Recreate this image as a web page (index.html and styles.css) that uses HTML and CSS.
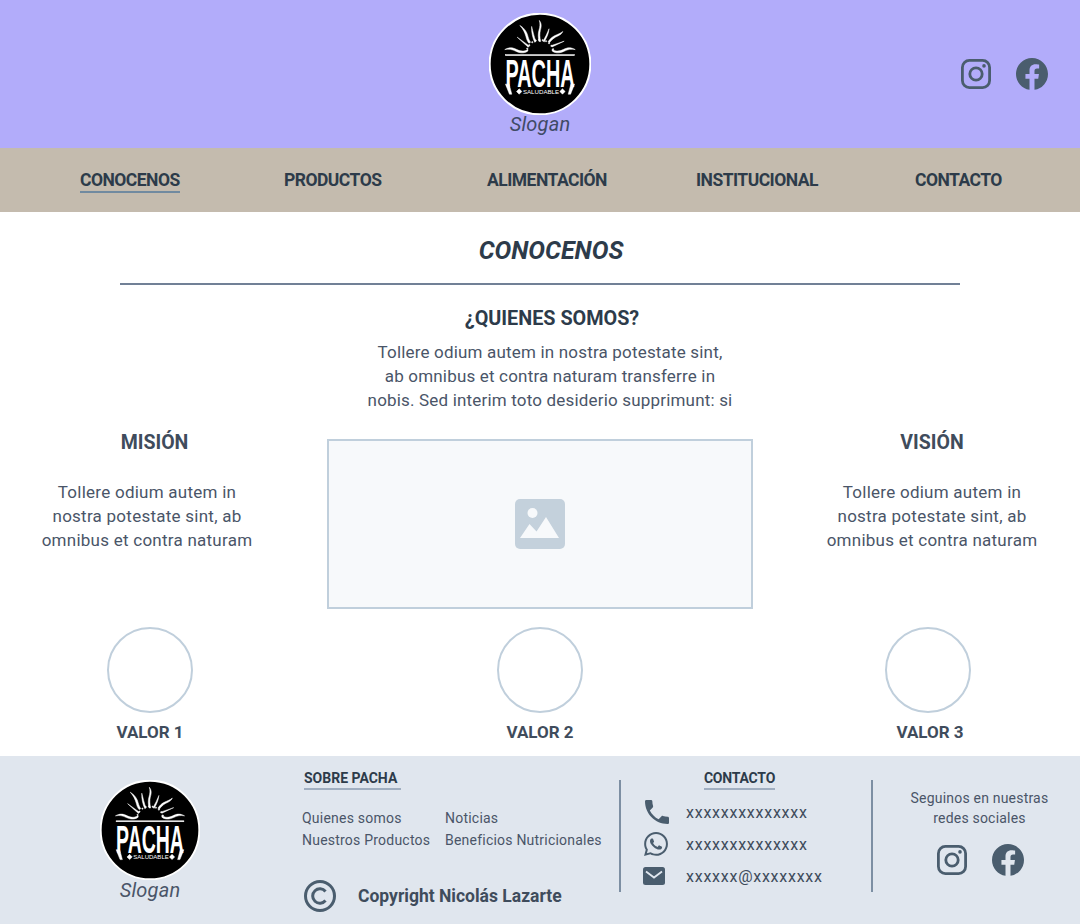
FILE: index.html
```html
<!DOCTYPE html>
<html lang="es">
<head>
<meta charset="utf-8">
<title>Pacha Saludable</title>
<link rel="stylesheet" href="styles.css">
</head>
<body>
<svg class="defs" width="0" height="0" aria-hidden="true">
  <symbol id="logo-art" viewBox="-152 -152 304 304">
    <circle r="150" fill="#000" stroke="#fff" stroke-width="6"/>
    <g fill="#fff" stroke="#fff" stroke-width="1.500">
      <path d="M-60-115c14 8 22 22 24 32 2 8 5 14 8 18l-5 3c-5-6-7-12-9-20-3-11-8-22-18-33z"/>
      <path d="M-25-112c4 14 7 30 13 45l-4 2c-6-14-10-30-9-47z"/>
      <path d="M-2-130c8 10 6 20 3 30-2 9-2 20 1 33h-5c-3-13-3-24 0-34 3-10 4-19 1-29z"/>
      <path d="M27-105c-1 14-7 26-14 39l-4-2c7-12 13-24 18-37z"/>
      <path d="M68-97c-4 10-14 13-22 17-7 4-13 10-18 17l-4-3c5-8 11-14 19-18 10-5 18-7 25-13z"/>
      <path d="M-68-80l36 26-3 4-33-30z"/>
      <path d="M72-68l-36 17-2-4z"/>
      <path d="M-105-43c14-8 24-6 36 0 10 5 22 7 33-1v5c-12 9-25 6-36 1-12-6-20-7-33-5z"/>
      <path d="M105-43c-14-8-24-6-36 0-10 5-22 7-33-1v5c12 9 25 6 36 1 12-6 20-7 33-5z"/>
      <circle cx="-38" cy="-46" r="2"/><circle cx="-32" cy="-56" r="2"/><circle cx="-23" cy="-65" r="2"/><circle cx="-13" cy="-70" r="2"/><circle cx="-3" cy="-72" r="2"/><circle cx="8" cy="-71" r="2"/><circle cx="18" cy="-68" r="2"/><circle cx="27" cy="-62" r="2"/><circle cx="34" cy="-54" r="2"/><circle cx="39" cy="-44" r="2"/>
      <rect x="-103" y="-28" width="206" height="3"/>
      <path d="M-103 60h11l8 30h-7zM103 60h-11l-8 30h7z"/>
      <path d="M-62 74l8 8-8 8-8-8zM67 74l8 8-8 8-8-8z"/>
    </g>
  </symbol>
  <symbol id="ig" viewBox="0 0 30 30">
    <rect x="1.400" y="1.400" width="27.200" height="27.200" rx="7" fill="none" stroke="currentColor" stroke-width="2.800"/>
    <circle cx="15" cy="15" r="6.200" fill="none" stroke="currentColor" stroke-width="2.800"/>
    <circle cx="23" cy="6.900" r="1.800" fill="currentColor"/>
  </symbol>
  <symbol id="fb" viewBox="2 2.040 20 20">
    <path fill="currentColor" d="M12 2.040C6.500 2.040 2 6.530 2 12.060C2 17.060 5.660 21.210 10.440 21.960V14.960H7.900V12.060H10.440V9.850C10.440 7.340 11.930 5.960 14.220 5.960C15.310 5.960 16.450 6.150 16.450 6.150V8.620H15.190C13.950 8.620 13.560 9.390 13.560 10.180V12.060H16.340L15.890 14.960H13.560V21.960A10 10 0 0 0 22 12.060C22 6.530 17.500 2.040 12 2.040Z"/>
  </symbol>
</svg>

<header class="top">
  <div class="brand">
    <svg class="logo" viewBox="-152 -152 304 304">
      <use href="#logo-art" x="-152" y="-152" width="304" height="304"/>
      <text class="logo-word" transform="translate(0 70) scale(1 1.970)" text-anchor="middle" textLength="206" lengthAdjust="spacingAndGlyphs">PACHA</text>
      <text class="logo-sub" x="3" y="88" text-anchor="middle" textLength="108" lengthAdjust="spacingAndGlyphs">SALUDABLE</text>
    </svg>
    <span class="slogan">Slogan</span>
  </div>
  <div class="social top-social">
    <svg class="ig"><use href="#ig"/></svg>
    <svg class="fb"><use href="#fb"/></svg>
  </div>
</header>

<nav class="nav">
  <a class="nav-link active">CONOCENOS</a>
  <a class="nav-link">PRODUCTOS</a>
  <a class="nav-link">ALIMENTACIÓN</a>
  <a class="nav-link">INSTITUCIONAL</a>
  <a class="nav-link">CONTACTO</a>
</nav>

<main class="main">
  <h1 class="page-title">CONOCENOS</h1>
  <hr class="rule">
  <h2 class="who-title">¿QUIENES SOMOS?</h2>
  <p class="who-text">Tollere odium autem in nostra potestate sint,<br>ab omnibus et contra naturam transferre in<br>nobis. Sed interim toto desiderio supprimunt: si</p>

  <div class="mv-row">
    <section class="mv mv-left">
      <h3 class="mv-title">MISIÓN</h3>
      <p class="mv-text">Tollere odium autem in<br>nostra potestate sint, ab<br>omnibus et contra naturam</p>
    </section>
    <div class="placeholder">
      <svg class="ph-icon" viewBox="0 0 50 50">
        <rect width="50" height="50" rx="5" fill="#c4d1dc"/>
        <circle cx="17.500" cy="14" r="5" fill="#f7f9fb"/>
        <path d="M5 39l9.500-14 7 7.500L31 18l13 21z" fill="#f7f9fb"/>
      </svg>
    </div>
    <section class="mv mv-right">
      <h3 class="mv-title">VISIÓN</h3>
      <p class="mv-text">Tollere odium autem in<br>nostra potestate sint, ab<br>omnibus et contra naturam</p>
    </section>
  </div>

  <div class="values">
    <div class="value"><span class="circle"></span><span class="value-name">VALOR 1</span></div>
    <div class="value"><span class="circle"></span><span class="value-name">VALOR 2</span></div>
    <div class="value"><span class="circle"></span><span class="value-name">VALOR 3</span></div>
  </div>
</main>

<footer class="footer">
  <div class="f-brand">
    <svg class="f-logo" viewBox="-152 -152 304 304">
      <use href="#logo-art" x="-152" y="-152" width="304" height="304"/>
      <text class="logo-word" transform="translate(0 70) scale(1 1.970)" text-anchor="middle" textLength="206" lengthAdjust="spacingAndGlyphs">PACHA</text>
      <text class="logo-sub" x="3" y="88" text-anchor="middle" textLength="108" lengthAdjust="spacingAndGlyphs">SALUDABLE</text>
    </svg>
    <span class="slogan">Slogan</span>
  </div>
  <div class="f-about">
    <h4 class="f-title">SOBRE PACHA</h4>
    <div class="f-links">
      <a>Quienes somos</a><a>Noticias</a>
      <a>Nuestros Productos</a><a>Beneficios Nutricionales</a>
    </div>
    <div class="copyright">
      <svg class="copy-icon" viewBox="0 0 32 32">
        <circle cx="16" cy="16" r="14.500" fill="none" stroke="currentColor" stroke-width="3"/>
        <path d="M21.500 11.500a7.200 7.200 0 1 0 0 9" fill="none" stroke="currentColor" stroke-width="3"/>
      </svg>
      <span>Copyright Nicolás Lazarte</span>
    </div>
  </div>
  <div class="f-contact">
    <h4 class="f-title">CONTACTO</h4>
    <ul class="contact-list">
      <li>
        <svg class="c-icon" viewBox="3 3 18 18"><path fill="currentColor" d="M6.620 10.790c1.440 2.830 3.760 5.140 6.590 6.590l2.200-2.200c.27-.27.67-.36 1.020-.24 1.120.37 2.330.57 3.570.57.550 0 1 .45 1 1V20c0 .55-.45 1-1 1-9.390 0-17-7.610-17-17 0-.55.45-1 1-1h3.500c.55 0 1 .45 1 1 0 1.250.2 2.450.57 3.570.11.35.03.74-.25 1.020l-2.200 2.200z"/></svg>
        <span>xxxxxxxxxxxxxx</span>
      </li>
      <li>
        <svg class="c-icon wa" viewBox="2 2 20 20"><path fill="currentColor" d="M12.040 2C6.580 2 2.130 6.450 2.130 11.910C2.130 13.660 2.590 15.360 3.450 16.860L2.050 22L7.300 20.620C8.750 21.410 10.380 21.830 12.040 21.830C17.500 21.830 21.950 17.380 21.950 11.920C21.950 9.270 20.920 6.780 19.050 4.910C17.180 3.030 14.690 2 12.040 2M12.050 3.670C14.250 3.670 16.310 4.530 17.870 6.090C19.420 7.650 20.280 9.720 20.280 11.920C20.280 16.460 16.580 20.150 12.040 20.150C10.560 20.150 9.110 19.760 7.850 19L7.550 18.830L4.430 19.650L5.260 16.610L5.060 16.290C4.240 15 3.800 13.470 3.800 11.910C3.810 7.370 7.500 3.670 12.050 3.670M8.530 7.330C8.370 7.330 8.100 7.390 7.870 7.640C7.650 7.890 7 8.500 7 9.710C7 10.930 7.890 12.100 8 12.270C8.140 12.440 9.760 14.940 12.250 16C12.840 16.270 13.300 16.420 13.660 16.530C14.250 16.720 14.790 16.690 15.220 16.630C15.700 16.560 16.680 16.030 16.890 15.450C17.100 14.870 17.100 14.380 17.040 14.270C16.970 14.170 16.810 14.110 16.560 14C16.310 13.860 15.090 13.260 14.870 13.180C14.640 13.100 14.500 13.060 14.310 13.300C14.150 13.550 13.670 14.110 13.530 14.270C13.380 14.440 13.240 14.460 13 14.340C12.740 14.210 11.940 13.950 11 13.110C10.260 12.450 9.770 11.640 9.620 11.390C9.500 11.150 9.610 11 9.730 10.890C9.840 10.780 10 10.600 10.100 10.450C10.230 10.310 10.270 10.200 10.350 10.040C10.430 9.870 10.390 9.730 10.330 9.610C10.270 9.500 9.770 8.260 9.560 7.770C9.360 7.290 9.160 7.350 9 7.340C8.860 7.340 8.700 7.330 8.530 7.330Z"/></svg>
        <span>xxxxxxxxxxxxxx</span>
      </li>
      <li>
        <svg class="c-icon mail" viewBox="0 0 22 18"><rect width="22" height="18" rx="2.500" fill="currentColor"/><path d="M3 4.500l8 6 8-6" fill="none" stroke="#e2e8f0" stroke-width="1.800"/></svg>
        <span>xxxxxx@xxxxxxxx</span>
      </li>
    </ul>
  </div>
  <div class="f-social">
    <p class="f-follow">Seguinos en nuestras<br>redes sociales</p>
    <div class="social">
      <svg class="ig"><use href="#ig"/></svg>
      <svg class="fb"><use href="#fb"/></svg>
    </div>
  </div>
</footer>
</body>
</html>
```

FILE: styles.css
```css
* { box-sizing: border-box; }
html, body { margin: 0; padding: 0; }
body {
  width: 1080px;
  height: 924px;
  overflow: hidden;
  background: #fff;
  color: #2d3b4a;
  font-family: Roboto, "Liberation Sans", sans-serif;
}
h1, h2, h3, h4, p, ul { margin: 0; padding: 0; }
.defs { position: absolute; }
.logo-word { font: 700 60px "Liberation Sans", sans-serif; fill: #fff; }
.logo-sub { font: 400 17px "Liberation Sans", sans-serif; fill: #fff; }

.top {
  height: 148px;
  background: #b2acfa;
  display: flex;
  justify-content: center;
  position: relative;
  padding-top: 13px;
}
.brand { display: flex; flex-direction: column; align-items: center; }
.logo { width: 102px; height: 102px; display: block; }
.slogan {
  font-style: italic;
  font-size: 20px;
  line-height: 24px;
  color: #4a5568;
  letter-spacing: .2px;
}
.brand .slogan { color: #3f4a66; margin-top: -3px; }
.social { display: flex; align-items: center; color: #4a5d6e; }
.ig { width: 30px; height: 30px; display: block; }
.fb { width: 32px; height: 32px; display: block; margin-left: 25px; }
.top-social { position: absolute; left: 961px; top: 58px; }

.nav {
  height: 64px;
  background: #c4bbae;
  display: grid;
  grid-template-columns: 204px 203px 209px 219px 1fr;
  padding-left: 80px;
  align-items: center;
}
.nav-link {
  justify-self: start;
  font-size: 17.500px;
  font-weight: 700;
  line-height: 22px;
  color: #2d3b4a;
  letter-spacing: -.52px;
  border-bottom: 2px solid transparent;
  margin-top: 2px;
}
.nav-link.active { border-bottom-color: #718aa0; }

.main { height: 544px; padding-top: 24px; }
.page-title {
  font-size: 25px;
  font-weight: 700;
  font-style: italic;
  line-height: 30px;
  text-align: center;
  padding-left: 22px;
}
.rule {
  margin: 17px 120px 0;
  border: 0;
  border-top: 2px solid #718096;
  height: 0;
}
.who-title {
  margin-top: 22px;
  font-size: 19.800px;
  font-weight: 700;
  line-height: 24px;
  text-align: center;
  padding-left: 24px;
}
.who-text {
  margin-top: 9px;
  font-size: 17px;
  line-height: 24px;
  letter-spacing: .18px;
  text-align: center;
  color: #4a5568;
  padding-left: 20px;
}
.mv-row {
  margin-top: 17px;
  display: grid;
  grid-template-columns: 327px 426px 327px;
}
.mv { text-align: center; }
.mv-title { margin-top: 1px; font-size: 19.500px; font-weight: 700; line-height: 26px; color: #3f4c5c; }
.mv-text { margin-top: 24px; font-size: 17px; line-height: 24px; letter-spacing: .25px; color: #4a5568; }
.mv-left .mv-title { padding-right: 18px; }
.mv-left .mv-text { padding-right: 33px; }
.mv-right .mv-title { padding-left: 31px; }
.mv-right .mv-text { padding-left: 31px; }
.placeholder {
  height: 170px;
  margin-top: 10px;
  background: #f7f9fb;
  border: 2px solid #c0cfdc;
  display: flex;
  align-items: center;
  justify-content: center;
}
.ph-icon { width: 50px; height: 50px; display: block; margin-left: -1px; }

.values {
  margin-top: 18px;
  display: grid;
  grid-template-columns: 300px 480px 300px;
}
.value { display: flex; flex-direction: column; align-items: center; }
.value:nth-child(3) { padding-right: 4px; }
.circle {
  width: 86px;
  height: 86px;
  border-radius: 50%;
  border: 2px solid #c0cfdc;
}
.value-name { margin-top: 7px; font-size: 17px; font-weight: 700; line-height: 24px; color: #3f4c5c; }
.value:nth-child(3) .value-name { margin-left: 4px; }

.footer {
  height: 168px;
  background: #e0e6ee;
  display: grid;
  grid-template-columns: 300px 319px 252px 209px;
  position: relative;
}
.f-brand { display: flex; flex-direction: column; align-items: center; padding-top: 24px; }
.f-logo { width: 100px; height: 100px; display: block; }
.f-brand .slogan { margin-top: -2px; color: #4a5568; }
.f-title {
  font-size: 14px;
  font-weight: 700;
  line-height: 18px;
  color: #2d3b4a;
  border-bottom: 2px solid #a0aec0;
  padding-bottom: 1px;
}
.f-about { padding: 13px 0 0 2px; }
.f-about .f-title { margin-left: 2px; width: 97px; }
.f-links {
  margin-top: 17px;
  display: grid;
  grid-template-columns: 143px 1fr;
  font-size: 14px;
  line-height: 22px;
  letter-spacing: .22px;
  color: #4a5568;
}
.copyright {
  margin-top: 29px;
  margin-left: 2px;
  display: flex;
  align-items: center;
  gap: 22px;
  font-size: 17.500px;
  font-weight: 700;
  color: #3f4c5c;
}
.copy-icon { width: 32px; height: 32px; color: #4a5d6e; }
.f-contact {
  margin-top: 24px;
  height: 112px;
  border-left: 2px solid #7d8fa3;
  display: flex;
  flex-direction: column;
  align-items: center;
  padding-right: 13px;
}
.f-contact .f-title { margin-top: -11px; letter-spacing: -.2px; }
.contact-list {
  list-style: none;
  align-self: stretch;
  padding-left: 24px;
  margin-top: 6px;
}
.contact-list li {
  height: 32px;
  display: flex;
  align-items: center;
  font-size: 16px;
  letter-spacing: .75px;
  color: #3f4c5c;
}
.c-icon { width: 24px; height: 24px; color: #4a5d6e; margin-right: 17px; flex: none; }
.c-icon.wa { margin-left: -1px; margin-right: 18px; }
.c-icon.mail { height: 18px; width: 22px; margin-left: -2px; margin-right: 21px; }
.f-social {
  margin-top: 24px;
  height: 112px;
  border-left: 2px solid #7d8fa3;
  display: flex;
  flex-direction: column;
  align-items: center;
  padding-left: 6px;
}
.f-follow {
  font-size: 14px;
  line-height: 20px;
  letter-spacing: .2px;
  text-align: center;
  color: #4a5568;
  margin-top: 8px;
}
.f-social .social { margin-top: 16px; margin-left: 2px; }
```
